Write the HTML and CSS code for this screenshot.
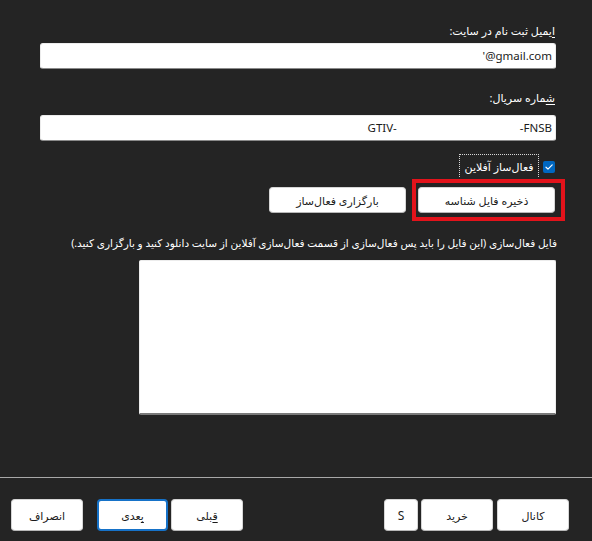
FILE: index.html
```html
<!DOCTYPE html>
<html lang="fa" dir="rtl">
<head>
<meta charset="utf-8">
<title>فعال‌سازی</title>
<link rel="stylesheet" href="styles.css">
</head>
<body>
<div class="window">
  <main class="form">
    <div class="label lbl-email"><u>ا</u>یمیل ثبت نام در سایت:</div>
    <div class="field field-email"><span class="val">'@gmail.com</span></div>
    <div class="label lbl-serial"><u>ش&#x200D;</u>&#x200D;ماره سریال:</div>
    <div class="field field-serial"><span class="val">GTIV-</span><span class="val serial-end">-FNSB</span></div>
    <div class="check-row">
      <span class="checkbox"><svg viewBox="0 0 12 12" width="12" height="12"><path d="M3 6.2 L5 8.1 L9.2 3.9" fill="none" stroke="#fff" stroke-width="1.2" stroke-linecap="round" stroke-linejoin="round"/></svg></span>
      <span class="check-label">فعال‌ساز آفلاین</span>
    </div>
    <div class="actions">
      <button class="btn btn-wide btn-marked">ذخیره فایل شناسه<span class="marker"></span></button>
      <button class="btn btn-wide">بارگزاری فعال‌ساز</button>
    </div>
    <p class="desc">فایل فعال‌سازی (این فایل را باید پس فعال‌سازی از قسمت فعال‌سازی آفلاین از سایت دانلود کنید و بارگزاری کنید.)</p>
    <div class="textarea"></div>
  </main>
  <footer class="footer">
    <div class="group">
      <button class="btn btn-foot">کانال</button>
      <button class="btn btn-foot gap4">خرید</button>
      <button class="btn btn-small gap3">S</button>
    </div>
    <div class="group">
      <button class="btn btn-foot"><u>ق&#x200D;</u>&#x200D;بلی</button>
      <button class="btn btn-foot btn-default gap3"><u>ب&#x200D;</u>&#x200D;عدی</button>
      <button class="btn btn-foot gap14">انصراف</button>
    </div>
  </footer>
</div>
</body>
</html>
```

FILE: styles.css
```css
html, body {
  margin: 0;
  padding: 0;
  background: #242424;
}

body {
  font-family: "Noto Sans", "DejaVu Sans", sans-serif;
  font-size: 11px;
  color: #ffffff;
}

.window {
  width: 592px;
  height: 541px;
  display: flex;
  flex-direction: column;
}

.form {
  height: 477px;
  box-sizing: border-box;
  padding: 22px 36px 0 40px;
  display: flex;
  flex-direction: column;
  align-items: stretch;
}

.label {
  line-height: 18px;
  height: 18px;
  color: #ffffff;
  padding-right: 1px;
}

.label u, .btn u {
  text-decoration-thickness: 1px;
  text-underline-offset: 2px;
}

.lbl-serial {
  margin-top: 20px;
}

.field {
  height: 26px;
  box-sizing: border-box;
  background: #ffffff;
  border: 1px solid #ececec;
  border-bottom: 1px solid #8a8a8a;
  border-radius: 3px;
  margin-top: 3px;
  display: flex;
  align-items: center;
  padding: 0 3px 1px 3px;
  color: #1b1b1b;
  font-size: 11.5px;
}

.field-email {
  direction: ltr;
  justify-content: flex-end;
}

.field-serial {
  margin-top: 8px;
  direction: ltr;
  justify-content: flex-end;
}

.serial-end {
  margin-left: 123px;
}

.check-row {
  margin-top: 13px;
  height: 23px;
  display: flex;
  align-items: center;
}

.checkbox {
  width: 12px;
  height: 12px;
  margin-right: 1px;
  margin-top: 2px;
  background: #0067c0;
  border-radius: 2px;
  display: flex;
  align-items: center;
  justify-content: center;
}

.checkbox svg {
  display: block;
}

.check-label {
  margin-right: 4px;
  width: 80px;
  height: 23px;
  box-sizing: border-box;
  border: 1px dotted #d8d8d8;
  border-bottom: none;
  display: flex;
  align-items: flex-end;
  justify-content: center;
  padding-bottom: 3px;
  white-space: nowrap;
}

.actions {
  margin-top: 10px;
  display: flex;
  gap: 12px;
  padding-right: 1px;
}

.btn {
  font-family: inherit;
  font-size: 11px;
  color: #1b1b1b;
  background: #ffffff;
  border: 1px solid #d6d6d6;
  border-bottom-color: #b8b8b8;
  border-radius: 4px;
  padding: 0;
  margin: 0;
  box-sizing: border-box;
  display: flex;
  align-items: center;
  justify-content: center;
  white-space: nowrap;
}

.btn-wide {
  width: 137px;
  height: 26px;
}

.btn-marked {
  position: relative;
}

.marker {
  position: absolute;
  top: -9px;
  bottom: -9px;
  right: -11px;
  left: -7px;
  border: 4px solid #e3131b;
  pointer-events: none;
}

.desc {
  margin: 21px -1px 0 0;
  font-size: 10.5px;
  line-height: 18px;
  white-space: nowrap;
}

.textarea {
  margin-top: 8px;
  margin-left: 99px;
  height: 155px;
  box-sizing: border-box;
  background: #ffffff;
  border: 1px solid #ececec;
  border-bottom: 2px solid #7a7a7a;
  border-radius: 2px;
}

.footer {
  border-top: 1px solid #a8a8a8;
  padding: 21px 23px 0 11px;
  display: flex;
  justify-content: space-between;
  align-items: flex-start;
}

.group {
  display: flex;
}

.btn-foot {
  width: 72px;
  height: 32px;
}

.btn-small {
  width: 34px;
  height: 32px;
  font-size: 12px;
}

.btn-default {
  border: 2px solid #1672c8;
  width: 71px;
}

.gap3 {
  margin-right: 3px;
}

.gap4 {
  margin-right: 4px;
}

.gap14 {
  margin-right: 14px;
}
```
